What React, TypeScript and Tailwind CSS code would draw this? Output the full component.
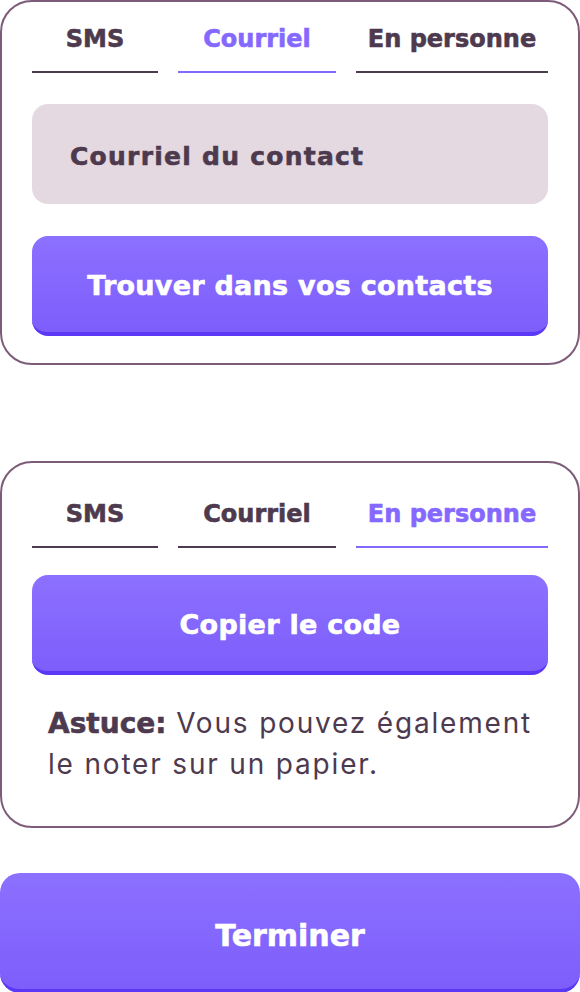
const tabs = ["SMS", "Courriel", "En personne"];
const widths = ["w-[126px]", "w-[158px]", "w-[192px]"];

const Tabs = ({ active }: { active: number }) => {
  return (
    <div className="flex gap-5 font-['DejaVu_Sans',sans-serif]">
      {tabs.map((t, i) => (
        <div
          key={t}
          className={`${widths[i]} text-center text-[24px] leading-[30px] font-bold [-webkit-text-stroke:0.6px] pt-[1px] pb-[17px] border-b-2 ${
            i === active ? "text-[#8569ff] border-[#8569ff]" : "text-[#4e3a4e] border-[#4e3a4e]"
          }`}
        >
          {t}
        </div>
      ))}
    </div>
  );
};

const Button = ({ text, big }: { text: string; big?: boolean }) => {
  return (
    <button
      className={`w-full flex items-center justify-center text-white font-bold [-webkit-text-stroke:0.6px] font-['DejaVu_Sans',sans-serif] bg-gradient-to-b from-[#8c70ff] to-[#7d5efb] border-b-4 border-[#5b38f6] ${
        big ? "h-[120px] rounded-[20px] text-[30px] pt-[8px]" : "h-[100px] rounded-[16px] text-[27px] pt-[4px] tracking-[0.01em]"
      }`}
    >
      {text}
    </button>
  );
};

export default function App() {
  return (
    <div className="w-[580px] h-[992px] bg-white font-['Inter',sans-serif] text-[#4e3a4e]">
      {/* Courriel */}
      <div className="border-2 border-[#7d5c7a] rounded-[32px] px-[30px] pt-[21px] pb-[27px]">
        <Tabs active={1} />
        <div className="mt-[31px] h-[100px] rounded-[16px] bg-[#e4d9e1] flex items-center px-[38px] pt-[5px] text-[25px] font-bold [-webkit-text-stroke:0.6px] tracking-[0.05em] font-['DejaVu_Sans',sans-serif]">
          Courriel du contact
        </div>
        <div className="mt-[32px]">
          <Button text="Trouver dans vos contacts" />
        </div>
      </div>

      {/* En personne */}
      <div className="mt-[96px] border-2 border-[#7d5c7a] rounded-[32px] px-[30px] pt-[35px] pb-[42px]">
        <Tabs active={2} />
        <div className="mt-[27px]">
          <Button text="Copier le code" />
        </div>
        <p className="mt-[28px] pl-[16px] pr-[4px] text-[28px] leading-[40px] tracking-[0.065em]">
          <span className="font-bold [-webkit-text-stroke:0.6px] font-['DejaVu_Sans',sans-serif] tracking-normal">Astuce:</span> Vous pouvez également le noter sur un papier.
        </p>
      </div>

      <div className="mt-[45px]">
        <Button text="Terminer" big />
      </div>
    </div>
  );
}
